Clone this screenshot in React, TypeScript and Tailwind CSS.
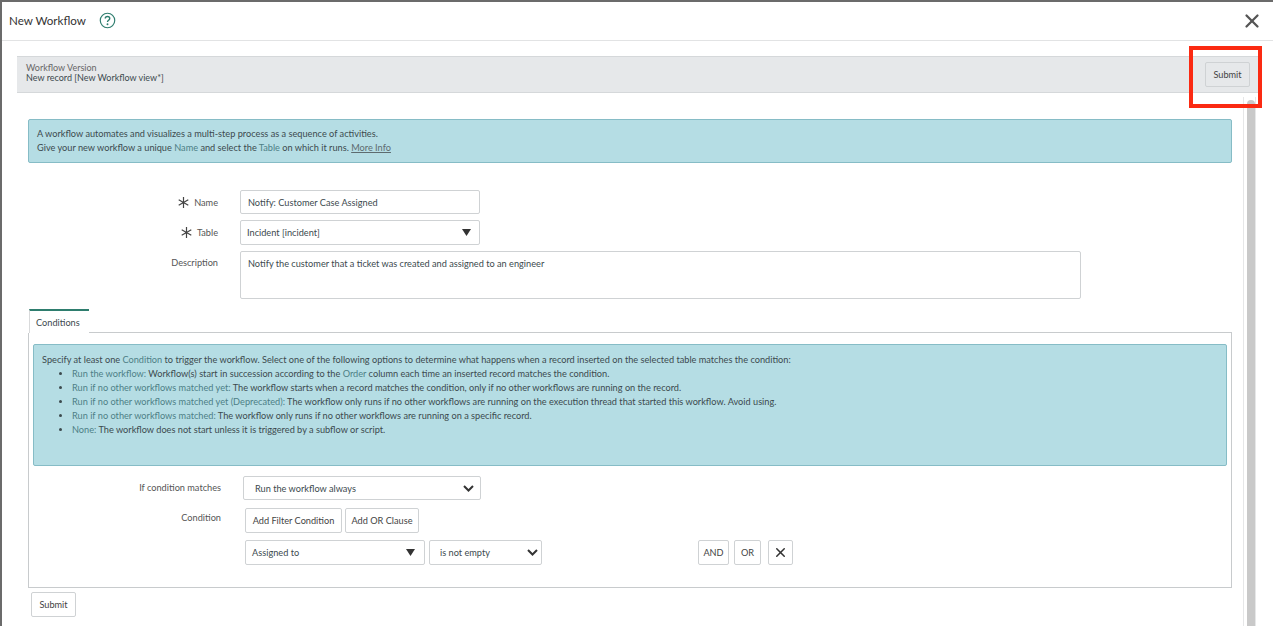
import { X } from "lucide-react";

const Caret = () => (
  <svg width="9" height="7" viewBox="0 0 9 7" className="shrink-0">
    <path d="M0 0h9L4.5 7z" fill="#333" />
  </svg>
);

const Chevron = () => (
  <svg width="11" height="7" viewBox="0 0 11 7" fill="none" className="shrink-0">
    <path d="M1 1l4.5 4.5L10 1" stroke="#333" strokeWidth="2" />
  </svg>
);

const Star = () => (
  <svg width="11" height="11" viewBox="0 0 11 11" stroke="#444" strokeWidth="1.2" className="shrink-0">
    <path d="M5.5 0v11M.7 2.7l9.6 5.6M10.3 2.7L.7 8.3" />
  </svg>
);

const Btn = ({ className = "", children }: { className?: string; children: React.ReactNode }) => (
  <button className={`flex items-center justify-center h-[25px] border border-[#cfd2d4] rounded-[2px] text-[#444] text-[9.2px] ${className}`}>
    {children}
  </button>
);

const Hi = ({ children }: { children: React.ReactNode }) => <span className="text-[#4d7f86]">{children}</span>;

const options: [string, string][] = [
  ["Run the workflow:", " Workflow(s) start in succession according to the "],
  ["Run if no other workflows matched yet:", " The workflow starts when a record matches the condition, only if no other workflows are running on the record."],
  ["Run if no other workflows matched yet (Deprecated):", " The workflow only runs if no other workflows are running on the execution thread that started this workflow. Avoid using."],
  ["Run if no other workflows matched:", " The workflow only runs if no other workflows are running on a specific record."],
  ["None:", " The workflow does not start unless it is triggered by a subflow or script."],
];

export default function App() {
  return (
    <div className="relative w-[1273px] h-[626px] overflow-hidden bg-white border-t-2 border-l-2 border-[#6b6b6b] font-['Lato',sans-serif] text-[9.2px] text-[#3c4a4e]">
      {/* Header */}
      <div className="flex items-center justify-between h-[39px] border-b border-[#e2e3e4] pl-[7px] pr-[10px]">
        <div className="flex items-center gap-[13px]">
          <span className="text-[11.6px] text-[#333]">New Workflow</span>
          <svg width="17" height="17" viewBox="0 0 16 16" fill="none">
            <circle cx="8" cy="8" r="6.8" stroke="#2e7d6e" strokeWidth="1.1" />
            <path d="M5.9 6.2c0-1.2 1-2 2.1-2s2.1.8 2.1 1.9c0 1.6-2.1 1.6-2.1 3.2" stroke="#2e7d6e" strokeWidth="1.3" />
            <circle cx="8" cy="11.5" r=".9" fill="#2e7d6e" />
          </svg>
        </div>
        <X size={22} strokeWidth={2.5} className="text-[#555]" />
      </div>

      <div className="pt-[15px] pl-[15px]">
        {/* Record bar */}
        <div className="flex items-center justify-between w-[1241px] h-[37px] bg-[#e6e8ea] border-y border-[#d5d8da] pl-[9px] pr-[8px] leading-[10px] text-[9px]">
          <div className="pb-[3px]">
            <div className="text-[#666]">Workflow Version</div>
            <div>New record [New Workflow view*]</div>
          </div>
          <Btn className="w-[45px]">Submit</Btn>
        </div>

        <div className="flex">
          <div className="w-[1226px] pt-[26px] pl-[11px]">
            {/* Intro */}
            <div className="h-[44px] w-[1204px] bg-[#b5dde4] border border-[#86bcc6] rounded-[2px] pt-[7px] pl-[8px] leading-[14px]">
              <div>A workflow automates and visualizes a multi-step process as a sequence of activities.</div>
              <div>
                Give your new workflow a unique <Hi>Name</Hi> and select the <Hi>Table</Hi> on which it runs.{" "}
                <span className="underline text-[#5d6b6f]">More Info</span>
              </div>
            </div>

            {/* Form */}
            <div className="grid grid-cols-[190px_841px] gap-x-[22px] gap-y-[6px] pt-[27px] items-center">
              <div className="flex items-center justify-end gap-[5px] pt-[1px] text-[#555]">
                <Star /> Name
              </div>
              <input
                readOnly
                value="Notify: Customer Case Assigned"
                className="w-[240px] h-[24px] border border-[#cfd2d4] rounded-[2px] px-[7px] outline-none text-[#3c4a4e]"
              />
              <div className="flex items-center justify-end gap-[5px] pt-[1px] text-[#555]">
                <Star /> Table
              </div>
              <div className="flex items-center justify-between w-[240px] h-[25px] border border-[#cfd2d4] rounded-[2px] pl-[6px] pr-[8px]">
                Incident [incident]
                <Caret />
              </div>
              <div className="self-start pt-[5px] text-right text-[#555]">Description</div>
              <textarea
                readOnly
                value="Notify the customer that a ticket was created and assigned to an engineer"
                className="w-[841px] h-[48px] border border-[#cfd2d4] rounded-[2px] px-[7px] py-[5px] outline-none resize-none text-[#3c4a4e]"
              />
            </div>

            {/* Conditions tab */}
            <div className="flex mt-[10px] w-[1204px] h-[24px]">
              <div className="flex items-center w-[60px] ml-[1px] pl-[6px] pt-[2px] border-t-2 border-[#2e7d6e] border-l border-l-[#d9dadb]">Conditions</div>
              <div className="flex-1 border-b border-[#c8cbcd]" />
            </div>
            <div className="w-[1204px] h-[255px] border border-t-0 border-[#c8cbcd] pt-[11px] px-[4px]">
              <div className="h-[122px] bg-[#b5dde4] border border-[#86bcc6] rounded-[2px] pt-[8px] pl-[8px] leading-[14px]">
                <div>
                  Specify at least one <Hi>Condition</Hi> to trigger the workflow. Select one of the following options to determine what happens when a record inserted on the selected table matches the condition:
                </div>
                <ul className="list-disc pl-[30px]">
                  {options.map(([name, rest], i) => (
                    <li key={name}>
                      <Hi>{name}</Hi>
                      {rest}
                      {i === 0 && (
                        <>
                          <Hi>Order</Hi> column each time an inserted record matches the condition.
                        </>
                      )}
                    </li>
                  ))}
                </ul>
              </div>

              <div className="grid grid-cols-[188px_1fr] gap-x-[22px] pt-[10px] text-[#555]">
                <div className="text-right pt-[5px]">If condition matches</div>
                <div className="flex items-center justify-between w-[238px] h-[24px] pt-[1px] border border-[#cfd2d4] rounded-[2px] pl-[11px] pr-[6px] text-[#3c4a4e]">
                  Run the workflow always
                  <Chevron />
                </div>
                <div className="text-right pt-[11px]">Condition</div>
                <div className="flex gap-[3px] pt-[8px] pl-[2px]">
                  <Btn className="w-[97px]">Add Filter Condition</Btn>
                  <Btn className="w-[74px]">Add OR Clause</Btn>
                </div>
                <div />
                <div className="flex items-center pt-[7px] pl-[2px] text-[#3c4a4e]">
                  <div className="flex items-center justify-between w-[180px] h-[25px] border border-[#cfd2d4] rounded-[2px] pl-[6px] pr-[9px]">
                    Assigned to
                    <Caret />
                  </div>
                  <div className="flex items-center justify-between w-[113px] h-[25px] ml-[4px] border border-[#cfd2d4] rounded-[2px] pl-[10px] pr-[3px]">
                    is not empty
                    <Chevron />
                  </div>
                  <Btn className="w-[31px] ml-[156px]">AND</Btn>
                  <Btn className="w-[27px] ml-[5px]">OR</Btn>
                  <Btn className="w-[25px] ml-[7px]">
                    <X size={15} strokeWidth={2.4} className="text-[#333]" />
                  </Btn>
                </div>
              </div>
            </div>
            <Btn className="w-[45px] mt-[4px] ml-[3px]">Submit</Btn>
          </div>

          {/* Scrollbar */}
          <div className="w-[13px] h-[540px] mt-[4px] pt-[3px] border-x border-[#e6e7e8] pl-[3px]">
            <div className="w-[8px] h-full bg-[#c9c9c9] rounded-t-[4px]" />
          </div>
        </div>
      </div>

      {/* Red annotation */}
      <div className="absolute left-[1187px] top-[44px] w-[73px] h-[62px] border-[4px] border-[#fb2a12]" />
    </div>
  );
}
